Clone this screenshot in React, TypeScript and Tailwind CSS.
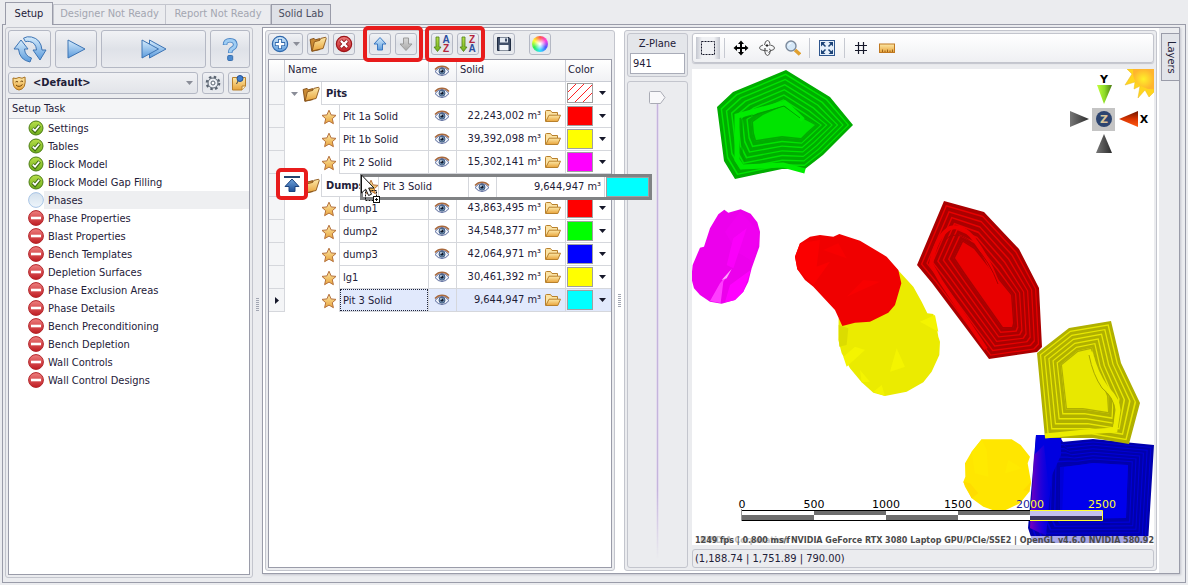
import type { ReactNode } from 'react';

type Point = [number, number];

const tasks = [
    { name: 'Settings', status: 'done' },
    { name: 'Tables', status: 'done' },
    { name: 'Block Model', status: 'done' },
    { name: 'Block Model Gap Filling', status: 'done' },
    { name: 'Phases', status: 'current' },
    { name: 'Phase Properties', status: 'blocked' },
    { name: 'Blast Properties', status: 'blocked' },
    { name: 'Bench Templates', status: 'blocked' },
    { name: 'Depletion Surfaces', status: 'blocked' },
    { name: 'Phase Exclusion Areas', status: 'blocked' },
    { name: 'Phase Details', status: 'blocked' },
    { name: 'Bench Preconditioning', status: 'blocked' },
    { name: 'Bench Depletion', status: 'blocked' },
    { name: 'Wall Controls', status: 'blocked' },
    { name: 'Wall Control Designs', status: 'blocked' },
];

const hatch = 'bg-[repeating-linear-gradient(135deg,#fff_0_5px,#f22_5px_6px)]';

const rows = [
    { name: 'Pits', group: true, solid: '', color: hatch },
    { name: 'Pit 1a Solid', solid: '22,243,002 m³', color: 'bg-[#ff0000]' },
    { name: 'Pit 1b Solid', solid: '39,392,098 m³', color: 'bg-[#ffff00]' },
    { name: 'Pit 2 Solid', solid: '15,302,141 m³', color: 'bg-[#ff00ff]' },
    { name: 'Dumps', group: true, solid: '', color: hatch },
    { name: 'dump1', solid: '43,863,495 m³', color: 'bg-[#ff0000]' },
    { name: 'dump2', solid: '34,548,377 m³', color: 'bg-[#00ff00]' },
    { name: 'dump3', solid: '42,064,971 m³', color: 'bg-[#0000ff]' },
    { name: 'lg1', solid: '30,461,392 m³', color: 'bg-[#ffff00]' },
    { name: 'Pit 3 Solid', solid: '9,644,947 m³', color: 'bg-[#00ffff]', selected: true },
];

/* ---------- icons ---------- */

function Gradients() {
    const stops: [string, string, string][] = [
        ['g-blue', '#d6ecfc', '#5b9bdc'],
        ['g-gold', '#fde9a8', '#e8a33a'],
        ['g-brown', '#f3c46a', '#c07a1c'],
        ['g-green', '#b9e04a', '#6fae1c'],
        ['g-red', '#ee7f7f', '#c01c22'],
        ['g-pale', '#d3e0ec', '#eef5fb'],
        ['g-grey', '#d8d8d8', '#a9a9a9'],
        ['g-navy', '#6fa3dc', '#1e4f96'],
    ];

    return (
        <svg width="0" height="0" className="absolute" aria-hidden="true">
            <defs>
                {stops.map(([id, from, to]) => (
                    <linearGradient key={id} id={id} x1="0" y1="0" x2="0" y2="1">
                        <stop offset="0" stopColor={from} />
                        <stop offset="1" stopColor={to} />
                    </linearGradient>
                ))}
                <linearGradient id="g-violet">
                    <stop offset="0" stopColor="#8a00b8" stopOpacity="0.9" />
                    <stop offset="1" stopColor="#3000e0" stopOpacity="0" />
                </linearGradient>
                <linearGradient id="g-cone-green">
                    <stop offset="0" stopColor="#c3ff3c" />
                    <stop offset="0.5" stopColor="#8fdc28" />
                    <stop offset="1" stopColor="#4a7a10" />
                </linearGradient>
                <linearGradient id="g-cone-red" x1="0" y1="0" x2="0" y2="1">
                    <stop offset="0" stopColor="#6a1400" />
                    <stop offset="0.5" stopColor="#d93400" />
                    <stop offset="1" stopColor="#ff5a14" />
                </linearGradient>
                <linearGradient id="g-cone-grey">
                    <stop offset="0" stopColor="#777" />
                    <stop offset="1" stopColor="#2c2c2c" />
                </linearGradient>
                <radialGradient id="g-sun">
                    <stop offset="0" stopColor="#fff02a" />
                    <stop offset="1" stopColor="#ffb52e" />
                </radialGradient>
            </defs>
        </svg>
    );
}

function Icon({ size = 16, box = 16, children }: { size?: number; box?: number; children: ReactNode }) {
    return (
        <svg width={size} height={size} viewBox={`0 0 ${box} ${box}`} className="block flex-none" aria-hidden="true">
            {children}
        </svg>
    );
}

const EyeIcon = () => (
    <Icon>
        <path d="M1 8.5Q4 4.5 8 4.5T15 8.5Q12 12.500 8 12.500T1 8.500Z" fill="#eef2fa" stroke="#5a6a9c" strokeWidth="1" />
        <path d="M1 6.500Q4 3.300 8 3.300T15 6.500" fill="none" stroke="#a8683c" strokeWidth="1.500" />
        <circle cx="8" cy="8.200" r="3" fill="#6f8fae" stroke="#2c4872" strokeWidth="0.800" />
        <circle cx="8" cy="8.200" r="1.400" fill="#10182c" />
        <circle cx="7" cy="7" r="0.800" fill="#fff" />
    </Icon>
);

const StarIcon = () => (
    <Icon>
        <path
            d="M8 1.200 10.100 5.900 15 6.400 11.300 9.700 12.400 14.700 8 12.100 3.600 14.700 4.700 9.700 1 6.400 5.900 5.900Z"
            fill="url(#g-gold)"
            stroke="#b5713c"
            strokeLinejoin="round"
        />
    </Icon>
);

// closed folder, seen at an angle
const FolderIcon = ({ size = 18 }: { size?: number }) => (
    <Icon size={size}>
        <path d="M1 4 4.500 3 5.500 4.300 9.500 3.200V13L2.500 14.500Z" fill="#c98a34" stroke="#7d4a12" strokeWidth="0.800" strokeLinejoin="round" />
        <path d="M2.800 14.200 4.800 6 9.500 4.800 10.500 3 14.800 2 15.300 3.200 12.500 12Z" fill="url(#g-gold)" stroke="#8a5417" strokeWidth="0.800" strokeLinejoin="round" />
    </Icon>
);

const OpenFolderIcon = () => (
    <Icon>
        <path d="M0.500 13.500V3.500Q0.500 2.500 1.500 2.500H5.500L7 4.500H12.500V7" fill="#fbe3a4" stroke="#b8802c" strokeLinejoin="round" />
        <path d="M0.800 13.500 4 7.200H15.500L12.800 13.500Z" fill="url(#g-gold)" stroke="#b8802c" strokeLinejoin="round" />
    </Icon>
);

const StatusIcon = ({ status }: { status: string }) => {
    if (status === 'done') {
        return (
            <Icon>
                <circle cx="8" cy="8" r="7" fill="url(#g-green)" stroke="#4c7d14" />
                <path d="M4.500 8.500 7 11 11.500 5.500" fill="none" stroke="#3f6a12" strokeWidth="3.600" />
                <path d="M4.800 8.600 7 10.700 11.200 5.700" fill="none" stroke="#fff" strokeWidth="1.700" />
            </Icon>
        );
    }
    if (status === 'current') {
        return (
            <Icon>
                <circle cx="8" cy="8" r="7.400" fill="url(#g-pale)" stroke="#a9c6e6" />
            </Icon>
        );
    }
    return (
        <Icon>
            <circle cx="8" cy="8" r="7.400" fill="url(#g-red)" stroke="#b3262b" />
            <rect x="3" y="6.700" width="10" height="2.600" fill="#fff" />
        </Icon>
    );
};

const RefreshIcon = () => (
    <Icon size={34} box={34}>
        <g fill="url(#g-blue)" stroke="#3d74b4" strokeLinejoin="round">
            <path d="M8 8 15 17H11.500Q12 24 18.500 26L17 30Q6.500 28 5.500 17H1Z" />
            <path d="M27 28 20 18H23.500Q23 10.500 16.500 9.500 14 9 12.500 9.800L10.500 6.200Q14 4 18.500 5 28 7 29 18H33Z" />
        </g>
    </Icon>
);

const PlayIcon = () => (
    <Icon size={24} box={24}>
        <path d="M4 3V21L21 12Z" fill="url(#g-blue)" stroke="#3d74b4" strokeLinejoin="round" />
    </Icon>
);

const FastIcon = () => (
    <Icon size={28} box={28}>
        <path d="M9.500 5V23L26 14Z" fill="url(#g-blue)" stroke="#3d74b4" strokeLinejoin="round" />
        <path d="M2 5V23L18.500 14Z" fill="url(#g-blue)" stroke="#3d74b4" strokeLinejoin="round" />
    </Icon>
);

const HelpIcon = () => (
    <Icon size={26} box={26}>
        <path d="M8 9Q8 4.300 13 4.300T18.300 8.500Q18.300 11 15.500 12.500 13.200 13.800 13.200 17" fill="none" stroke="#4c86c6" strokeWidth="4.600" />
        <path d="M8 8.500Q8.400 4.300 13 4.300T18.300 8.500Q18.300 11 15.500 12.500 13.200 13.800 13.200 16.400" fill="none" stroke="#9fcdf3" strokeWidth="2.800" />
        <rect x="10.700" y="19.500" width="5" height="5" rx="1" fill="#4b8bd0" stroke="#3a6fae" />
    </Icon>
);

const MaskIcon = () => (
    <Icon>
        <path d="M2 3Q5 4.200 8 2.500 11 4.200 14 2 15.500 14 8 15 1 14 2 3Z" fill="url(#g-gold)" stroke="#a8701c" />
        <path d="M4.500 7Q6 5.800 7 7M9.500 6.600Q11 5.400 12 6.600M5 10Q8 13 11.500 9.500" fill="none" stroke="#6e4208" />
    </Icon>
);

const GearIcon = () => (
    <Icon>
        <circle cx="8" cy="8" r="6.300" fill="none" stroke="#58626f" strokeWidth="2" strokeDasharray="2.500 2.450" />
        <circle cx="8" cy="8" r="5" fill="#eef1f6" stroke="#58626f" />
        <circle cx="8" cy="8" r="2" fill="#fff" stroke="#58626f" />
    </Icon>
);

const NoteIcon = () => (
    <Icon>
        <path d="M1.500 2.500H14.500V11L11 15H1.500Z" fill="url(#g-gold)" stroke="#b8802c" />
        <path d="M14.500 11H11V15" fill="#fff3cf" stroke="#b8802c" />
        <path d="M7.500 5 5.500 9" stroke="#444" />
        <circle cx="9" cy="3.500" r="3" fill="#3f7fd0" stroke="#234f92" />
    </Icon>
);

const PlusIcon = () => (
    <Icon size={18}>
        <circle cx="8" cy="8" r="6.800" fill="url(#g-blue)" stroke="#2f67ab" />
        <path d="M8 3.500V12.500M3.500 8H12.500" stroke="#2f67ab" strokeWidth="3.600" />
        <path d="M8 4.200V11.800M4.200 8H11.800" stroke="#fff" strokeWidth="2" />
    </Icon>
);

const DeleteIcon = () => (
    <Icon size={18}>
        <circle cx="8" cy="8" r="6.800" fill="url(#g-red)" stroke="#9c1418" />
        <path d="M5 5 11 11M11 5 5 11" stroke="#8c1014" strokeWidth="3.600" />
        <path d="M5.200 5.200 10.800 10.800M10.800 5.200 5.200 10.800" stroke="#fff" strokeWidth="2" />
    </Icon>
);

const ArrowIcon = ({ down = false }: { down?: boolean }) => (
    <Icon>
        {down ? (
            <path d="M8 14.500 14 8H10.500V2H5.500V8H2Z" fill="url(#g-grey)" stroke="#9a9a9a" strokeLinejoin="round" />
        ) : (
            <path d="M8 1.500 14 8H10.500V14H5.500V8H2Z" fill="url(#g-blue)" stroke="#3a78c2" strokeLinejoin="round" />
        )}
    </Icon>
);

const SortIcon = ({ top, bottom, topColor, bottomColor }: { top: string; bottom: string; topColor: string; bottomColor: string }) => (
    <Icon size={18} box={18}>
        <path d="M4.500 16.500 8 12H6V2H3V12H1Z" fill="url(#g-green)" stroke="#4c7d14" strokeWidth="0.800" strokeLinejoin="round" />
        <g fontSize="10" fontWeight="bold" fontFamily="Liberation Sans, sans-serif" textAnchor="middle">
            <text x="13" y="8" fill={topColor}>{top}</text>
            <text x="13" y="17" fill={bottomColor}>{bottom}</text>
        </g>
    </Icon>
);

const SaveIcon = () => (
    <Icon>
        <path d="M1.500 1.500H13L14.500 3V14.500H1.500Z" fill="#41506a" stroke="#202c42" />
        <rect x="4" y="1.500" width="8" height="5" fill="#e4eaf2" />
        <rect x="9" y="2.500" width="2" height="3" fill="#41506a" />
        <rect x="3.500" y="9" width="9" height="5.500" fill="#f4f7fb" />
    </Icon>
);

const TopIcon = () => (
    <Icon size={18} box={18}>
        <rect x="1" y="1" width="16" height="2" fill="#23456f" />
        <path d="M9 4 16 11.500H12V16.500H6V11.500H2Z" fill="url(#g-navy)" stroke="#1b437e" strokeLinejoin="round" />
    </Icon>
);

const Caret = ({ className = 'text-[#16182a]' }: { className?: string }) => (
    <svg width="7" height="4" viewBox="0 0 7 4" className={`block flex-none ${className}`} aria-hidden="true">
        <path d="M0 0H7L3.500 4Z" fill="currentColor" />
    </svg>
);

/* ---------- building blocks ---------- */

function ToolButton({ label, className = 'w-[22px] h-[22px]', children }: { label: string; className?: string; children: ReactNode }) {
    return (
        <button
            type="button"
            aria-label={label}
            className={`flex shrink-0 items-center justify-center gap-1 rounded-[3px] border border-[#b4b8c4] bg-linear-to-b from-[#f1f2f5] via-[#dfe2e8] to-[#e9ebef] ${className}`}
        >
            {children}
        </button>
    );
}

const Highlight = ({ className }: { className: string }) => (
    <span className={`pointer-events-none absolute rounded-[5px] border-4 border-[#e81c1c] ${className}`} />
);

const Grip = () => (
    <div className="flex w-[9px] flex-none items-center justify-center">
        <span className="h-[13px] w-[3px] bg-[repeating-linear-gradient(180deg,#a2a6b2_0_1px,transparent_1px_2px)]" />
    </div>
);

function TaskPanel() {
    return (
        <section className="mb-1 flex w-[248px] flex-none flex-col gap-1 rounded-[3px] border border-[#c3c5cd] p-[2px]">
            <div className="flex gap-1">
                <ToolButton label="Refresh" className="h-[38px] w-[43px]"><RefreshIcon /></ToolButton>
                <ToolButton label="Run" className="h-[38px] w-[42px]"><PlayIcon /></ToolButton>
                <ToolButton label="Run all" className="h-[38px] grow"><FastIcon /></ToolButton>
                <ToolButton label="Help" className="h-[38px] w-[40px]"><HelpIcon /></ToolButton>
            </div>
            <div className="flex gap-1">
                <div className="relative flex h-[22px] flex-1 items-center rounded-[3px] border border-[#b4b8c4] bg-linear-to-b from-[#f0f1f4] to-[#e2e4e9]">
                    <span className="absolute left-[2px]"><MaskIcon /></span>
                    <select aria-label="Configuration" className="h-full w-full appearance-none pl-6 font-bold outline-none">
                        <option>&lt;Default&gt;</option>
                    </select>
                    <span className="pointer-events-none absolute right-1"><Caret className="text-[#8a8d98]" /></span>
                </div>
                <ToolButton label="Options"><GearIcon /></ToolButton>
                <ToolButton label="Notes"><NoteIcon /></ToolButton>
            </div>
            <div className="flex-1 border border-[#9a9ca9] bg-white">
                <h2 className="h-5 border-b border-[#c9ccd4] bg-[#f4f5f7] px-[3px] leading-[19px]">Setup Task</h2>
                <ul>
                    {tasks.map((task) => (
                        <li key={task.name} className="flex h-[18px] items-center pl-[19px]">
                            <StatusIcon status={task.status} />
                            <span className={`h-full flex-1 pl-1 leading-[19px] ${task.status === 'current' ? 'bg-[#eeeff1]' : ''}`}>{task.name}</span>
                        </li>
                    ))}
                </ul>
            </div>
        </section>
    );
}

function SolidsTable() {
    return (
        <table className="w-full table-fixed border-separate border-spacing-0">
            <colgroup>
                <col className="w-[16px]" />
                <col className="w-[144px]" />
                <col className="w-[28px]" />
                <col className="w-[109px]" />
                <col />
            </colgroup>
            <thead>
                <tr className="h-[22px] bg-linear-to-b from-white to-[#f0f1f4] text-left [&>th]:border-b [&>th]:border-[#c9ccd4] [&>th]:p-0 [&>th]:font-normal [&>th:not(:last-child)]:border-r">
                    <th aria-label="Row" />
                    <th><span className="pl-[3px]">Name</span></th>
                    <th aria-label="Visible"><span className="flex pl-[5px]"><EyeIcon /></span></th>
                    <th><span className="pl-[3px]">Solid</span></th>
                    <th><span className="pl-[2px]">Color</span></th>
                </tr>
            </thead>
            <tbody>
                {rows.map((row) => (
                    <tr
                        key={row.name}
                        className={`h-[23px] [&>td]:border-[#d5d7dc] [&>td]:p-0 [&>td:not(:last-child)]:border-r [&>td:nth-child(n+3)]:border-b ${row.selected ? '[&>td:nth-child(n+3)]:bg-[#e1e9fc]' : ''}`}
                    >
                        <td className="border-b bg-[#f4f5f7]">
                            {row.selected && (
                                <svg width="4" height="7" viewBox="0 0 4 7" className="mx-auto block" aria-hidden="true">
                                    <path d="M0 0V7L4 3.500Z" fill="#16182a" />
                                </svg>
                            )}
                        </td>
                        <td>
                            <div className="flex h-[23px]">
                                <div className={`flex flex-none items-center justify-end ${row.group ? 'w-9 gap-1 pr-px' : 'w-[54px] pr-[2px]'}`}>
                                    {row.group ? <><Caret className="text-[#8a8d98]" /><FolderIcon /></> : <StarIcon />}
                                </div>
                                <div className={`flex min-w-0 flex-1 items-center border-b border-l border-[#d5d7dc] ${row.group ? 'pl-1 font-bold' : ''}`}>
                                    <span
                                        className={`h-[22px] flex-1 leading-[23px] ${row.group ? '' : 'px-[3px]'} ${row.selected ? 'bg-[#e1e9fc] outline-1 -outline-offset-1 outline-dotted outline-[#20243a]' : ''}`}
                                    >
                                        {row.name}
                                    </span>
                                </div>
                            </div>
                        </td>
                        <td><span className="flex pl-[5px]"><EyeIcon /></span></td>
                        <td>
                            {row.solid && (
                                <span className="flex items-center justify-end gap-1 pr-1 leading-[22px]">
                                    {row.solid}
                                    <OpenFolderIcon />
                                </span>
                            )}
                        </td>
                        <td>
                            <button type="button" aria-label={`Color of ${row.name}`} className="flex items-center gap-[6px] pl-px">
                                <span className={`h-5 w-[26px] border border-[#a0a0a0] ${row.color}`} />
                                <Caret />
                            </button>
                        </td>
                    </tr>
                ))}
            </tbody>
        </table>
    );
}

// the row that hangs on the pointer while it is dragged to another group
function DragRow() {
    return (
        <div className="absolute left-[94px] top-[143px] z-10 flex h-[26px] w-[292px] border-3 border-[#808284] bg-white [&>span]:flex [&>span]:flex-none [&>span]:items-center [&>span]:border-[#d5d7dc]">
            <span className="w-4 border-r"><StarIcon /></span>
            <span className="w-[90px] border-r pl-1">Pit 3 Solid</span>
            <span className="w-[28px] border-r pl-[5px]"><EyeIcon /></span>
            <span className="w-[108px] justify-end border-r pr-[3px]">9,644,947 m³</span>
            <div className="ml-px flex-1 border border-[#a0a0a0] bg-[#00ffff]" />
            <svg width="24" height="32" viewBox="0 0 24 32" className="absolute -left-[3px] -top-[3px]" aria-hidden="true">
                <rect x="5.500" y="16.500" width="11" height="10" fill="none" stroke="#111" strokeDasharray="2 1" />
                <path d="M1.500 1V19L5.700 15.200 8.600 21.500 11.500 20.200 8.700 14H14Z" fill="#fff" stroke="#111" />
                <rect x="13.500" y="22.500" width="6" height="6" fill="#fff" stroke="#111" />
                <path d="M16.500 24V27M15 25.500H18" stroke="#111" />
            </svg>
        </div>
    );
}

function SolidsPanel() {
    return (
        <section className="relative flex w-[350px] flex-none flex-col gap-1 rounded-[3px] border border-[#c3c5cd] bg-[#ebecef] p-[2px]">
            <div className="flex gap-[14px]">
                <div className="flex gap-1">
                    <ToolButton label="Add" className="h-[22px] w-[35px]"><PlusIcon /><Caret className="text-[#8a8d98]" /></ToolButton>
                    <ToolButton label="Open"><FolderIcon /></ToolButton>
                    <ToolButton label="Delete"><DeleteIcon /></ToolButton>
                </div>
                <div className="relative flex gap-1">
                    <ToolButton label="Move up"><ArrowIcon /></ToolButton>
                    <ToolButton label="Move down"><ArrowIcon down /></ToolButton>
                    <Highlight className="-inset-x-[6px] -inset-y-[7px]" />
                </div>
                <div className="relative flex gap-1">
                    <ToolButton label="Sort ascending"><SortIcon top="A" bottom="Z" topColor="#2c4fa0" bottomColor="#b3263c" /></ToolButton>
                    <ToolButton label="Sort descending"><SortIcon top="Z" bottom="A" topColor="#b3263c" bottomColor="#2c4fa0" /></ToolButton>
                    <Highlight className="-inset-x-[6px] -inset-y-[7px]" />
                </div>
                <ToolButton label="Save"><SaveIcon /></ToolButton>
                <ToolButton label="Colors">
                    <span className="size-4 rounded-full bg-[radial-gradient(#fff_5%,transparent_55%),conic-gradient(#ff5a4a,#ff40e0,#4a5aff,#30e0ff,#30f050,#ffff30,#ff5a4a)]" />
                </ToolButton>
            </div>
            <div className="flex-1 border border-[#9a9ca9] bg-white">
                <SolidsTable />
            </div>
            <div className="absolute left-[10px] top-[137px] flex h-8 w-8 items-center justify-center rounded-[5px] border-4 border-[#e81c1c] bg-white">
                <TopIcon />
            </div>
            <DragRow />
        </section>
    );
}

/* ---------- 3D view ---------- */

const toPath = (points: Point[]) => `M${points.map((p) => p.join(' ')).join('L')}Z`;

// benches of a pit: the outline shrinks step by step towards its floor
function Benches({ outer, inner, steps, light, dark }: { outer: Point[]; inner: Point[]; steps: number; light: string; dark: string }) {
    const at = (t: number) =>
        toPath(outer.map(([x, y], i): Point => [x + (inner[i][0] - x) * t, y + (inner[i][1] - y) * t]));

    return (
        <>
            {Array.from({ length: steps }, (_, i) => (
                <g key={i}>
                    <path d={at(i / steps)} fill={dark} />
                    <path d={at((i + 0.7) / steps)} fill={light} />
                </g>
            ))}
            <path d={at(0.95)} fill={dark} />
            <path d={toPath(inner)} fill={light} />
        </>
    );
}

function Scene() {
    return (
        <svg viewBox="692 69 462 476" preserveAspectRatio="xMidYMid meet" className="block min-h-0 w-full flex-1 bg-white" role="img" aria-label="3D view">
            <Benches
                outer={[[786, 70], [830, 97], [853, 125], [823, 155], [805, 169], [782, 169], [735, 179], [724, 161], [717, 107], [733, 92]]}
                inner={[[783, 106], [800, 117], [815, 125], [807, 132], [801, 138], [782, 136], [756, 140], [754, 133], [753, 122], [763, 115]]}
                steps={7}
                light="#00e400"
                dark="#00ac00"
            />
            <path d="M805 171 783 165 742 167 737 160 737 116 785 103 803 120" fill="none" stroke="#00ec00" strokeWidth="5" />
            <path d="M745 161 742 155V119L784 106 800 118" fill="none" stroke="#00a000" strokeWidth="1" />

            <g transform="translate(700 65) scale(0.3333)">
                <path d="M73 434 85 443 122 433 152 446 172 472 180 500 178 545 155 610 145 650 130 680 105 705 65 716 30 710 0 690-18 670-26 640-22 600 0 548 12 545 30 490 55 448Z" fill="#ec00ec" />
                <path d="M75 500 120 440 178 500 160 590 110 560Z" fill="#f000f0" />
                <path d="M140 490 100 520 80 600 100 610Z" fill="#fa00fa" />
                <path d="M152 615 90 660 75 712 105 705 130 680Z" fill="#ff00ff" />
                <path d="M95 612 60 655 30 708 62 714 70 650Z" fill="#ff3cff" />
                <path d="M95 612 65 645 80 640Z" fill="#ffa4ff" />
            </g>

            <g transform="translate(780 190) scale(0.3333)">
                <path d="M340 225 400 290 425 335 442 370 460 372 468 400 475 440 480 455 478 495 455 545 430 577 380 605 315 618 280 608 245 577 210 535 185 490 175 450 176 385Z" fill="#ebeb00" />
                <path d="M225 470 255 480 200 530 190 500ZM420 395 465 375 475 425ZM350 475 375 530 330 545ZM240 540 270 575 245 577ZM305 585 315 618 280 605Z" fill="#f4f400" />
                <path d="M176 405 205 415 200 465 178 470Z" fill="#dcdc00" />
                <path d="M160 140 178 132 240 152 320 200 355 240 364 280 345 345 325 368 270 395 225 398 187 408 165 360 100 290 75 270 52 238 45 200 60 160 90 140 120 135Z" fill="#f00000" />
                <path d="M60 160 120 150 110 230 150 215 100 285 52 238 45 200Z" fill="#fb0000" />
                <path d="M130 180 175 160 200 205ZM200 320 250 270 300 275Z" fill="#f80000" />
            </g>

            <Benches
                outer={[[944, 201], [984, 212], [1019, 249], [1039, 288], [1042, 347], [1037, 352], [989, 359], [932, 283], [917, 265]]}
                inner={[[963, 242], [974, 249], [993, 273], [1011, 295], [1013, 323], [1012, 327], [1003, 327], [965, 273], [955, 258]]}
                steps={7}
                light="#e80000"
                dark="#aa0000"
            />
            <path d="M998 284Q990 262 976 242 964 224 950 228 936 236 931 264L940 280 986 349" fill="none" stroke="#ec0000" strokeWidth="4" />
            <path d="M998 284Q990 262 974 245 962 232 950 236 940 242 936 262" fill="none" stroke="#a80000" strokeWidth="1" />

            {/* the blue pit is cut by the lower edge of the view */}
            <Benches
                outer={[[1036, 435], [1061, 437], [1062, 442], [1093, 439], [1154, 445], [1148, 543], [1033, 543], [1028, 528]]}
                inner={[[1060, 467], [1070, 466], [1080, 465], [1093, 463], [1128, 465], [1126, 518], [1065, 519], [1060, 510]]}
                steps={7}
                light="#0000d8"
                dark="#0000ac"
            />
            <path d="M1064 467 1093 463 1128 465 1126 518 1062 519Z" fill="#0000ec" />
            <path d="M1036 435H1061V455L1052 475 1046 535 1030 528Z" fill="#0000e0" />
            <path d="M1034 455 1044 445 1050 500 1046 536 1030 528Z" fill="url(#g-violet)" />

            <Benches
                outer={[[1111, 321], [1121, 363], [1140, 403], [1129, 444], [1093, 438], [1045, 438], [1037, 353], [1069, 328]]}
                inner={[[1091, 349], [1095, 367], [1107, 396], [1108, 412], [1083, 408], [1067, 408], [1062, 365], [1078, 352]]}
                steps={6}
                light="#e8e800"
                dark="#b0b000"
            />
            <path d="M1090 352Q1096 375 1106 388 1118 400 1118 410L1115 430 1085 432 1045 436" fill="none" stroke="#ecec00" strokeWidth="5" />
            <path d="M1089 355Q1093 375 1102 388 1114 398 1114 408L1113 424" fill="none" stroke="#a8a800" strokeWidth="1" />

            <g transform="translate(950 310) scale(0.3333)">
                <path d="M95 388 185 388 212 405 240 440 233 460 243 515 238 545 210 580 150 608 100 590 65 565 45 530 40 515 46 500 45 460 65 425Z" fill="#ffe600" />
                <path d="M95 388 65 425 75 490 115 500 110 420ZM175 450 165 490 215 475Z" fill="#ffea00" />
                <path d="M40 515 60 520 85 550 65 565ZM220 540 243 515 238 545Z" fill="#ffdc00" />
            </g>

            {/* scale bar, in inverted colours over the blue pit */}
            <path d="M742 510.500H1030M742 520.500H1030" stroke="#000" />
            <path d="M742 515H814V520H742ZM814 511H886V515H814ZM886 515H958V520H886ZM958 511H1030V515H958Z" fill="#6e6e6e" />
            <path d="M742 511H814V515H742ZM814 515H886V520H814ZM886 511H958V515H886ZM958 515H1030V520H958Z" fill="#fff" />
            <rect x="741" y="509" width="1" height="12" fill="#999" />
            <rect x="1030" y="511" width="72" height="5" fill="#c3bff2" />
            <rect x="1030" y="516" width="72" height="4" fill="#3a3460" />
            <path d="M1030 510.500H1102.500V520.500H1030" fill="none" stroke="#ffff30" />
            <g fontSize="11" fontFamily="DejaVu Sans, sans-serif" textAnchor="middle">
                <text x="742" y="508">0</text>
                <text x="814" y="508">500</text>
                <text x="886" y="508">1000</text>
                <text x="958" y="508">1500</text>
                <text x="1030" y="508"><tspan fill="#1a1aa0">20</tspan><tspan fill="#ffff30">00</tspan></text>
                <text x="1102" y="508" fill="#ffff30">2500</text>
            </g>

            <rect x="1030" y="536" width="124" height="9" fill="#fff" fillOpacity="0.650" />
            <g fontSize="8" fontWeight="bold" fontFamily="DejaVu Sans, sans-serif" fill="#4a4a4a">
                <text x="1154" y="543" textAnchor="end">
                    <tspan fill="#bbb">NVIDIA Corporation </tspan>
                    NVIDIA GeForce RTX 3080 Laptop GPU/PCIe/SSE2 | OpenGL v4.6.0 NVIDIA 580.92
                </text>
                <text x="695" y="543">1249 fps | 0.800 ms/f</text>
            </g>

            {/* sun and axis cones */}
            <path d="M1127 69 1132 74 1125 85 1135 82 1134 89 1140 86 1138 98 1145 90 1149 97 1154 92V69Z" fill="#ffd51e" stroke="#e8b820" strokeWidth="0.500" />
            <path d="M1133 69Q1132 83 1143 87 1149 90 1154 89V69Z" fill="url(#g-sun)" />
            <path d="M1097 85H1112L1104 104Z" fill="url(#g-cone-green)" />
            <path d="M1138 111V127L1119 119Z" fill="url(#g-cone-red)" />
            <path d="M1070 111V127L1089 119Z" fill="url(#g-cone-grey)" />
            <path d="M1096 153H1112L1104 134Z" fill="url(#g-cone-grey)" />
            <rect x="1092" y="108" width="23" height="23" fill="#c4c4c4" />
            <circle cx="1104" cy="119" r="8" fill="#2c4470" />
            <g fontSize="11" fontWeight="bold" fontFamily="DejaVu Sans, sans-serif" textAnchor="middle">
                <text x="1104" y="83">Y</text>
                <text x="1144" y="123">X</text>
                <text x="1104" y="123" fill="#d8c49a">Z</text>
            </g>
        </svg>
    );
}

const Separator = () => <span className="block h-5 w-px flex-none bg-[#c6c9d1]" />;

function ViewToolbar() {
    const button = 'flex h-6 w-[26px] flex-none items-center justify-center';

    return (
        <div className="flex h-[30px] items-center rounded-[3px] border border-[#c3c5cd] bg-linear-to-b from-white to-[#eff0f3] pl-[3px] shadow-[0_1px_1px_#c3c5cd]">
            <button type="button" aria-label="Select" aria-pressed="true" className="mr-1 flex h-[22px] w-6 flex-none items-center justify-center bg-[linear-gradient(90deg,#c3c6cf,#f0f1f4_25%,#f0f1f4_75%,#c3c6cf)]">
                <Icon><rect x="1.500" y="1.500" width="13" height="13" fill="none" stroke="#16182a" strokeDasharray="2 1" /></Icon>
            </button>
            <Separator />
            <button type="button" aria-label="Pan" className={`${button} ml-[3px]`}>
                <Icon>
                    <path d="M8 2V14M2 8H14" stroke="#000" strokeWidth="2" />
                    <path d="M8 0.500 11 4H5ZM8 15.500 11 12H5ZM0.500 8 4 5V11ZM15.500 8 12 5V11Z" />
                </Icon>
            </button>
            <button type="button" aria-label="Rotate" className={button}>
                <Icon>
                    <g fill="none" stroke="#555">
                        <path d="M5.500 5Q6 0.500 8.500 0.500T11 6M5.500 10Q6 15.500 8.500 15.500T11.500 10" />
                        <path d="M4 5Q0.500 6 0.500 8T5 10.500 9 10.800M12 5.200Q15.500 6 15.500 8T12 10.500M9.500 12.500 12 10.500 10 8.800" />
                        <path d="M8 4V7M6.500 5.500H9.500M6 8V10" stroke="#222" />
                    </g>
                </Icon>
            </button>
            <button type="button" aria-label="Zoom" className={button}>
                <Icon>
                    <path d="M10 10 15 14.500" stroke="#e0a030" strokeWidth="3.600" />
                    <circle cx="6" cy="6" r="5" fill="#d5e8f8" stroke="#7c8a9c" strokeWidth="1.400" />
                    <path d="M3.500 5.500Q4 3 6.500 3" fill="none" stroke="#fff" />
                </Icon>
            </button>
            <span className="ml-[3px]"><Separator /></span>
            <button type="button" aria-label="Zoom to fit" className={`${button} ml-1`}>
                <Icon>
                    <rect x="0.500" y="0.500" width="15" height="15" fill="#e6f0fb" stroke="#2f568e" />
                    <path d="M2 2H6.500L2 6.500ZM14 2V6.500L9.500 2ZM2 14V9.500L6.500 14ZM14 14H9.500L14 9.500Z" fill="#1d4478" />
                    <path d="M3 3 6.500 6.500M13 3 9.500 6.500M3 13 6.500 9.500M13 13 9.500 9.500" stroke="#1d4478" strokeWidth="1.500" />
                </Icon>
            </button>
            <span className="ml-1"><Separator /></span>
            <button type="button" aria-label="Grid" className={`${button} ml-[3px]`}>
                <Icon><path d="M5.500 2V14M10.500 2V14M2 5.500H14M2 10.500H14" stroke="#16182a" strokeWidth="1.200" /></Icon>
            </button>
            <button type="button" aria-label="Measure" className={button}>
                <Icon>
                    <rect x="0.500" y="4" width="15" height="8.500" fill="url(#g-gold)" stroke="#c07820" />
                    <path d="M3.500 12V9.500M6 12V10.500M8.500 12V9.500M11 12V10.500M13.500 12V9.500" stroke="#8a5010" strokeWidth="0.800" />
                </Icon>
            </button>
        </div>
    );
}

function ViewPanel() {
    return (
        <section className="flex min-w-0 flex-1 gap-1 rounded-[3px] border border-[#c3c5cd] bg-[#ebecef] p-[2px]">
            <div className="flex w-[61px] flex-none flex-col gap-1">
                <div className="flex h-11 flex-col rounded-[3px] border border-[#c3c5cd] bg-[#e4e6ea]">
                    <label htmlFor="z-plane" className="h-[19px] text-center leading-[19px]">Z-Plane</label>
                    <input id="z-plane" type="text" defaultValue="941" className="mx-[2px] h-[21px] min-w-0 border border-[#a9acb8] bg-white px-[2px] outline-none" />
                </div>
                <div className="relative flex flex-1 flex-col items-center rounded-[3px] border border-[#c3c5cd] pb-2 pt-[9px]">
                    <svg width="17" height="13" viewBox="0 0 17 13" className="block flex-none" aria-hidden="true">
                        <path d="M0.500 1.500Q0.500 0.500 1.500 0.500H11.500L16 6.500 11.500 12.500H1.500Q0.500 12.500 0.500 11.500Z" fill="#f8f8fa" stroke="#a9abb4" />
                    </svg>
                    <span className="w-[3px] flex-1 bg-[linear-gradient(90deg,#e4dcee_1px,#c4b4dc_1px_2px,#e4dcee_2px)] [mask-image:linear-gradient(#000_85%,transparent)]" />
                    <input type="range" aria-label="Z-Plane level" defaultValue={0} className="absolute inset-0 h-full w-full opacity-0 [writing-mode:vertical-lr]" />
                </div>
            </div>
            <div className="flex min-w-0 flex-1 flex-col">
                <ViewToolbar />
                <div className="mt-[6px] flex min-h-0 flex-1 flex-col bg-white">
                    <Scene />
                </div>
                <output className="mt-1 block h-[19px] rounded-[3px] border border-[#c3c5cd] px-[2px] leading-[18px]">
                    (1,188.74 | 1,751.89 | 790.00)
                </output>
            </div>
        </section>
    );
}

export default function App() {
    const tab = 'flex h-5 items-center justify-center border border-b-0 whitespace-nowrap';

    return (
        <div className="flex h-screen flex-col bg-[#ebecef] px-[2px] pb-[2px] font-['DejaVu_Sans_Condensed','DejaVu_Sans',sans-serif] text-[11px] text-[#1e2038]">
            <Gradients />
            <nav className="z-1 -mb-px flex flex-none items-end pl-[3px] pt-[2px]" role="tablist">
                <button type="button" role="tab" aria-selected="true" className="flex h-[23px] w-12 items-center justify-center border border-b-0 border-[#9a9ca9] bg-[#ebecef]">Setup</button>
                <button type="button" role="tab" disabled className={`${tab} mb-px w-[113px] border-[#c3c5cd] text-[#a3a6b1]`}>Designer Not Ready</button>
                <button type="button" role="tab" disabled className={`${tab} mb-px w-[105px] border-l-0 border-[#c3c5cd] text-[#a3a6b1]`}>Report Not Ready</button>
                <button type="button" role="tab" className={`${tab} mb-px w-[60px] border-[#9a9ca9] bg-[#dfe1e7] text-[#4a4d60]`}>Solid Lab</button>
            </nav>
            <main className="flex min-h-0 flex-1 border border-[#9a9ca9] pl-[2px] pr-[5px] pt-[2px]">
                <TaskPanel />
                <Grip />
                <div className="mb-2 flex min-w-0 flex-1 border border-[#9a9ca9] bg-white shadow-[1px_1px_2px_#c3c5cd]">
                    <div className="flex min-w-0 flex-1 p-[2px]">
                        <SolidsPanel />
                        <Grip />
                        <ViewPanel />
                    </div>
                    <aside className="w-5 flex-none bg-[#ebecef] pl-[2px] pt-[5px]">
                        <button type="button" className="flex h-12 w-[18px] items-center justify-center border border-r-0 border-[#9a9ca9] bg-[#e2e4e9] [writing-mode:vertical-rl]">Layers</button>
                    </aside>
                </div>
            </main>
        </div>
    );
}
